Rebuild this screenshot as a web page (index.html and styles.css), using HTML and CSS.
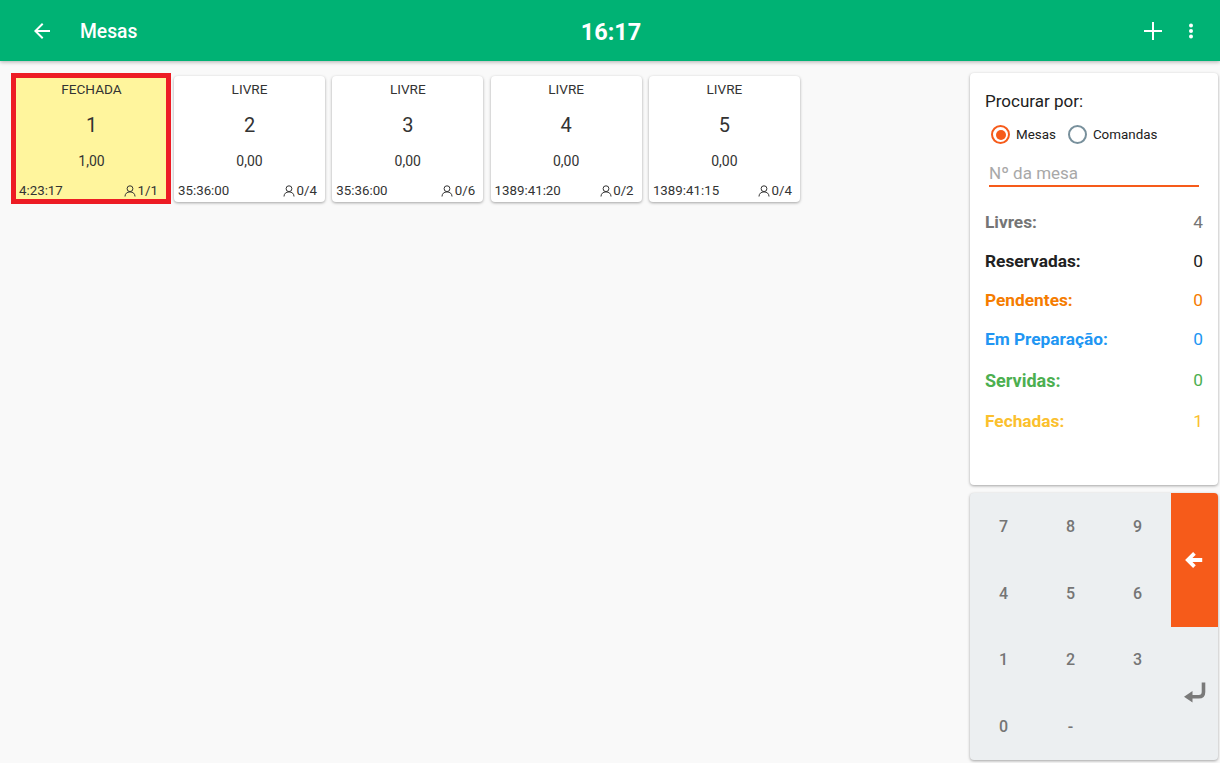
FILE: index.html
```html
<!DOCTYPE html>
<html lang="pt">
<head>
  <meta charset="UTF-8" />
  <title>Mesas</title>
  <link rel="stylesheet" href="styles.css">
</head>
<body>
  <svg class="defs" width="0" height="0">
    <symbol id="person" viewBox="0 0 12 12">
      <circle cx="6" cy="3.7" r="2.9" fill="none" stroke="currentColor" stroke-width="1"/>
      <path d="M1 11.5c0-2.8 2-4.6 5-4.6s5 1.8 5 4.6" fill="none" stroke="currentColor" stroke-width="1"/>
    </symbol>
  </svg>

  <header class="toolbar">
    <div class="toolbar-left">
      <svg class="icon-back" viewBox="0 0 24 24" width="24" height="24"><path d="M20 11H7.8l5.6-5.6L12 4l-8 8 8 8 1.4-1.4L7.8 13H20z" fill="#fff"/></svg>
      <span class="toolbar-title">Mesas</span>
    </div>
    <div class="clock">16:17</div>
    <div class="toolbar-right">
      <svg viewBox="0 0 24 24" width="24" height="24"><path d="M12 3v18M3 12h18" stroke="#fff" stroke-width="2" fill="none"/></svg>
      <svg viewBox="0 0 24 24" width="24" height="24"><circle cx="12" cy="6.5" r="2" fill="#fff"/><circle cx="12" cy="12" r="2" fill="#fff"/><circle cx="12" cy="17.5" r="2" fill="#fff"/></svg>
    </div>
  </header>

  <main class="content">
    <section class="tables">
      <div class="table-card selected">
        <div class="status">FECHADA</div>
        <div class="number">1</div>
        <div class="value">1,00</div>
        <div class="card-foot"><span>4:23:17</span><span class="seats"><svg width="12" height="12"><use href="#person"/></svg>1/1</span></div>
      </div>
      <div class="table-card">
        <div class="status">LIVRE</div>
        <div class="number">2</div>
        <div class="value">0,00</div>
        <div class="card-foot"><span>35:36:00</span><span class="seats"><svg width="12" height="12"><use href="#person"/></svg>0/4</span></div>
      </div>
      <div class="table-card">
        <div class="status">LIVRE</div>
        <div class="number">3</div>
        <div class="value">0,00</div>
        <div class="card-foot"><span>35:36:00</span><span class="seats"><svg width="12" height="12"><use href="#person"/></svg>0/6</span></div>
      </div>
      <div class="table-card">
        <div class="status">LIVRE</div>
        <div class="number">4</div>
        <div class="value">0,00</div>
        <div class="card-foot"><span>1389:41:20</span><span class="seats"><svg width="12" height="12"><use href="#person"/></svg>0/2</span></div>
      </div>
      <div class="table-card">
        <div class="status">LIVRE</div>
        <div class="number">5</div>
        <div class="value">0,00</div>
        <div class="card-foot"><span>1389:41:15</span><span class="seats"><svg width="12" height="12"><use href="#person"/></svg>0/4</span></div>
      </div>
    </section>

    <aside class="side">
      <div class="search-panel">
        <div class="search-label">Procurar por:</div>
        <div class="radios">
          <span class="radio on"></span><span class="radio-text">Mesas</span>
          <span class="radio"></span><span class="radio-text">Comandas</span>
        </div>
        <div class="search-input">Nº da mesa</div>
        <div class="stats">
          <div class="stat livres"><span>Livres:</span><span class="count">4</span></div>
          <div class="stat reservadas"><span>Reservadas:</span><span class="count">0</span></div>
          <div class="stat pendentes"><span>Pendentes:</span><span class="count">0</span></div>
          <div class="stat preparacao"><span>Em Preparação:</span><span class="count">0</span></div>
          <div class="stat servidas"><span>Servidas:</span><span class="count">0</span></div>
          <div class="stat fechadas"><span>Fechadas:</span><span class="count">1</span></div>
        </div>
      </div>

      <div class="keypad">
        <div class="key">7</div><div class="key">8</div><div class="key">9</div>
        <div class="key key-back">
          <svg viewBox="0 0 18 18" width="20" height="20"><path d="M15.5 9H3.5M8.5 3 2.5 9l6 6" stroke="#fff" stroke-width="3.4" fill="none"/></svg>
        </div>
        <div class="key">4</div><div class="key">5</div><div class="key">6</div>
        <div class="key">1</div><div class="key">2</div><div class="key">3</div>
        <div class="key key-enter">
          <svg viewBox="0 0 24 24" width="24" height="24"><path d="M20.5 1.5v9.5c0 3-1.8 4.8-4.8 4.8H6" stroke="#7a7a7a" stroke-width="3.6" fill="none"/><path d="M9.5 10 1 15.8 9.5 21.5z" fill="#7a7a7a"/></svg>
        </div>
        <div class="key">0</div><div class="key">-</div><div class="key"></div>
      </div>
    </aside>
  </main>
</body>
</html>
```

FILE: styles.css
```css
html, body {
  margin: 0;
  padding: 0;
  height: 100%;
  background-color: #f9f9f9;
  color: #212121;
  font-family: Roboto, sans-serif;
  overflow: hidden;
}

.defs {
  position: absolute;
}

.toolbar {
  height: 61px;
  background-color: #00b274;
  color: #fff;
  display: grid;
  grid-template-columns: 1fr auto 1fr;
  align-items: center;
  box-shadow: 0 1px 4px rgba(0, 0, 0, 0.3);
  position: relative;
}

.toolbar-left {
  display: flex;
  align-items: center;
  padding-left: 30px;
  gap: 26px;
}

.toolbar-title {
  font-size: 19.3px;
  font-weight: 500;
  padding-top: 2px;
}

.clock {
  font-size: 23.5px;
  font-weight: 700;
  padding: 2px 0 0 2px;
}

.toolbar-right {
  display: flex;
  justify-content: flex-end;
  align-items: center;
  gap: 14px;
  padding-right: 17px;
}

.content {
  display: flex;
  justify-content: space-between;
  padding: 12px 2px 0 11px;
}

.tables {
  display: flex;
  align-items: flex-start;
}

.table-card {
  box-sizing: border-box;
  width: 151px;
  height: 126px;
  margin: 3px 7.3px 0 0;
  background-color: #fff;
  border-radius: 4px;
  box-shadow: 0 1px 3px rgba(0, 0, 0, 0.35);
  padding: 4px 8px 0 4px;
  display: flex;
  flex-direction: column;
  text-align: center;
  color: #333;
}

.table-card.selected {
  width: 160px;
  height: 131px;
  margin: 0 3px 0 0;
  background-color: #fff59d;
  border: 5px solid #ed1c24;
  border-radius: 0;
  box-shadow: none;
  padding: 2px 8px 0 3px;
}

.table-card.selected .status,
.table-card.selected .number,
.table-card.selected .value {
  padding-left: 6px;
}

.status {
  font-size: 13.6px;
  line-height: 18px;
  padding-left: 4px;
}

.number {
  font-size: 20px;
  line-height: 24px;
  margin-top: 15px;
  padding-left: 4px;
}

.value {
  font-size: 14px;
  line-height: 18px;
  margin-top: 15px;
  padding-left: 4px;
}

.card-foot {
  display: flex;
  justify-content: space-between;
  font-size: 13.3px;
  line-height: 16px;
  margin-top: 12.5px;
}

.seats {
  display: flex;
  align-items: center;
  gap: 1.5px;
}

.side {
  width: 248px;
  display: flex;
  flex-direction: column;
  gap: 8px;
}

.search-panel {
  box-sizing: border-box;
  height: 412px;
  background-color: #fff;
  border-radius: 4px;
  box-shadow: 0 1px 3px rgba(0, 0, 0, 0.35);
  padding: 17px 15px 0;
}

.search-label {
  font-size: 17px;
  line-height: 22px;
}

.radios {
  display: flex;
  align-items: center;
  margin: 13px 0 0 6px;
  font-size: 13.4px;
  color: #212121;
}

.radio {
  box-sizing: border-box;
  width: 19px;
  height: 19px;
  border: 2px solid #78909c;
  border-radius: 50%;
  margin-right: 6px;
  position: relative;
}

.radio.on {
  border-color: #f65b1a;
}

.radio.on::after {
  content: "";
  position: absolute;
  inset: 2.5px;
  border-radius: 50%;
  background-color: #f65b1a;
}

.radio-text {
  margin-right: 12px;
}

.search-input {
  margin: 18px 4px 0;
  font-size: 17px;
  line-height: 22px;
  color: #a8a8a8;
  border-bottom: 2px solid #f65b1a;
  width: 210px;
  padding-bottom: 1px;
}

.stats {
  margin-top: 16px;
}

.stat {
  display: flex;
  justify-content: space-between;
  font-size: 17.3px;
  font-weight: 700;
  height: 39px;
  line-height: 39px;
}

.stat .count {
  font-weight: 400;
  font-size: 17.3px;
}

.stat.servidas {
  height: 43px;
  line-height: 43px;
}

.livres { color: #757575; }
.reservadas { color: #212121; }
.pendentes { color: #f57c00; }
.preparacao { color: #2196f3; }
.servidas { color: #4caf50; font-size: 18px; }
.fechadas { color: #fbc02d; }

.keypad {
  height: 267px;
  background-color: #eceff1;
  border-radius: 4px;
  box-shadow: 0 1px 3px rgba(0, 0, 0, 0.35);
  display: grid;
  grid-template-columns: 67px 67px 67px 47px;
  grid-template-rows: repeat(4, 1fr);
  overflow: hidden;
}

.key {
  display: flex;
  align-items: center;
  justify-content: center;
  font-size: 16px;
  font-weight: 500;
  color: #757575;
}

.key-back {
  grid-column: 4;
  grid-row: 1 / span 2;
  background-color: #f65b1a;
}

.key-enter {
  grid-column: 4;
  grid-row: 3 / span 2;
}
```
